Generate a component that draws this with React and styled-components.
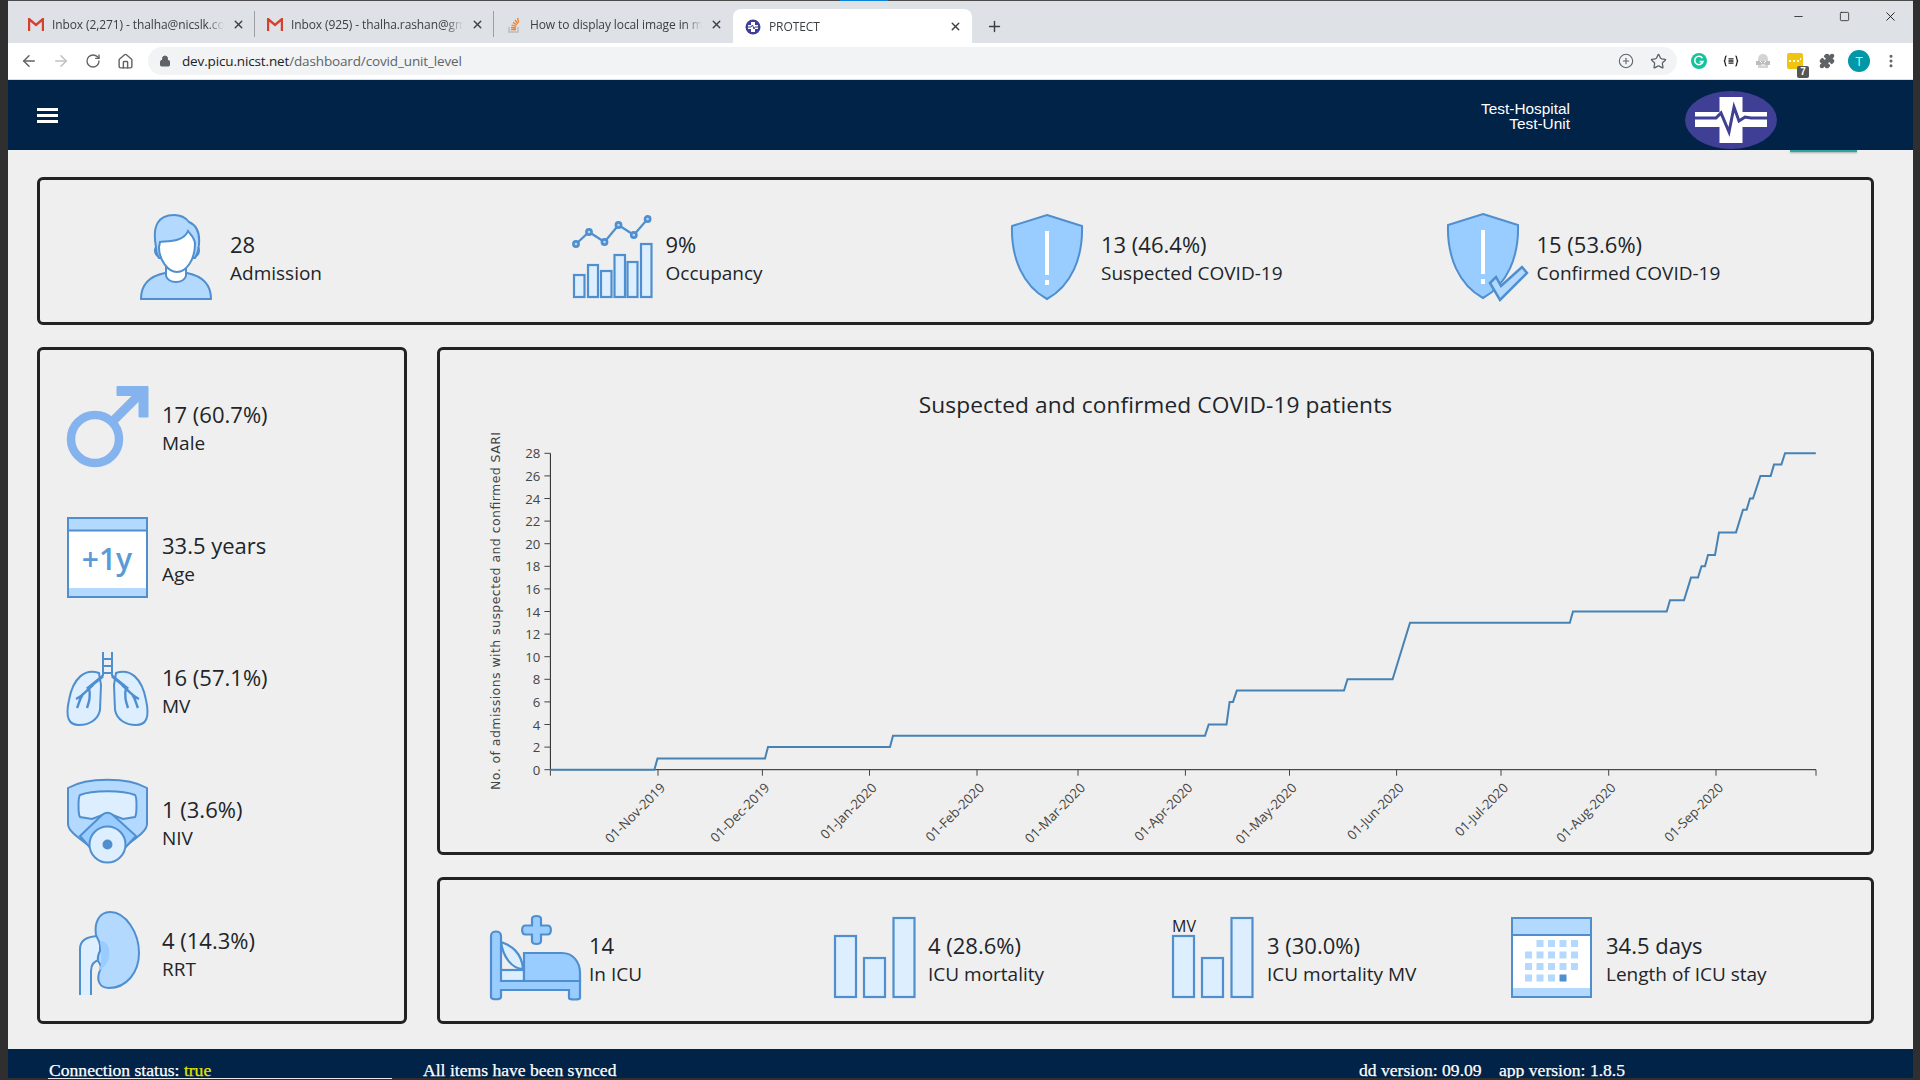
import styled, { createGlobalStyle } from "styled-components";
import {
  ArrowLeft,
  ArrowRight,
  RotateCw,
  House,
  Lock,
  CirclePlus,
  Star,
  Puzzle,
  EllipsisVertical,
  Minus,
  Square,
  X,
  Plus,
} from "lucide-react";

const STROKE = "#4f8fcf";
const LIGHT = "#b3d9ff";
const PALE = "#ddeeff";
const MID = "#99ccff";

const GlobalStyle = createGlobalStyle`
  html, body {
    margin: 0;
    height: 1080px;
    overflow: hidden;
    background: #2f2f2f;
  }
  * { box-sizing: border-box; }
`;

const Screen = styled.div`
  width: 1920px;
  height: 1080px;
  display: flex;
  flex-direction: column;
  position: relative;
  overflow: hidden;
`;

const Frame = styled.div`
  width: 1905px;
  height: 1078px;
  margin-left: 8px;
  display: flex;
  flex-direction: column;
  background: #efefef;
`;

const TopGlow = styled.div`
  position: absolute;
  left: 840px;
  top: 0;
  width: 48px;
  height: 1px;
  background: #0a84d6;
`;

const TabStrip = styled.div`
  height: 43px;
  flex: none;
  background: #dee1e6;
  border-top: 1px solid #4a4a4a;
  padding: 8px 0 0 8px;
  display: flex;
  align-items: stretch;
  font: 12px "Open Sans", sans-serif;
  color: #3c4043;
`;

const Tab = styled.div`
  width: 239px;
  flex: none;
  display: flex;
  align-items: center;
  gap: 8px;
  padding: 1px 9px 0 12px;
  border-right: 1px solid ${(p) => (p.$divider ? "#9aa0a6" : "transparent")};
  margin: ${(p) => (p.$active ? "0" : "2px 0 6px")};
  background: ${(p) => (p.$active ? "#fff" : "transparent")};
  border-radius: ${(p) => (p.$active ? "8px 8px 0 0" : "0")};
`;

const TabTitle = styled.span`
  flex: 1;
  white-space: nowrap;
  overflow: hidden;
  letter-spacing: -0.1px;
  mask-image: linear-gradient(to right, #000 90%, transparent);
`;

const NewTab = styled.div`
  width: 44px;
  display: flex;
  align-items: center;
  justify-content: center;
  color: #3c4043;
`;

const WindowControls = styled.div`
  margin-left: auto;
  margin-top: -8px;
  display: flex;
  align-items: flex-start;
  color: #111;
`;

const WindowButton = styled.div`
  width: 46px;
  height: 30px;
  display: flex;
  align-items: center;
  justify-content: center;
`;

const Toolbar = styled.div`
  height: 37px;
  flex: none;
  background: #fff;
  border-bottom: 1px solid #dadce0;
  display: flex;
  align-items: center;
  padding: 0 6px 0 5px;
  color: #5f6368;
`;

const NavButton = styled.div`
  width: 32px;
  height: 28px;
  flex: none;
  display: flex;
  align-items: center;
  justify-content: center;
  color: ${(p) => (p.$muted ? "#bdc1c6" : "#5f6368")};
`;

const Omnibox = styled.div`
  width: 1529px;
  height: 28px;
  margin-left: 7px;
  flex: none;
  border-radius: 14px;
  background: #f1f3f4;
  display: flex;
  align-items: center;
  padding: 0 3px 0 11px;
  font: 13.5px "Open Sans", sans-serif;
  letter-spacing: -0.14px;
  color: #5f6368;
`;

const UrlHost = styled.span`
  color: #202124;
  margin-left: 11px;
`;

const OmniActions = styled.div`
  margin-left: auto;
  display: flex;
`;

const Extensions = styled.div`
  display: flex;
  margin-left: 6px;
`;

const ExtBadge = styled.span`
  position: absolute;
  right: 2px;
  bottom: -3px;
  width: 12px;
  height: 12px;
  background: #555;
  color: #fff;
  border-radius: 2px;
  font: bold 10px/12px "Liberation Sans", sans-serif;
  text-align: center;
`;

const ExtSlot = styled(NavButton)`
  position: relative;
`;

const Avatar = styled.div`
  width: 22px;
  height: 22px;
  border-radius: 50%;
  background: #0097a7;
  color: #d9f4f7;
  font: 13px/22px "Open Sans", sans-serif;
  text-align: center;
`;

const Navbar = styled.header`
  height: 70px;
  flex: none;
  background: #012348;
  display: flex;
  align-items: center;
  padding: 0 0 0 29px;
  position: relative;
`;

const Hamburger = styled.div`
  width: 21px;
  display: flex;
  flex-direction: column;
  gap: 3px;
  margin-top: 1px;
  span {
    display: block;
    height: 3px;
    background: #fff;
  }
`;

const Hospital = styled.div`
  margin-left: auto;
  text-align: right;
  color: #fff;
  font: 15.4px/15px "Liberation Sans", sans-serif;
  width: 300px;
  margin-top: 1px;
`;

const LogoWrap = styled.div`
  margin-left: 115px;
  margin-right: 136px;
  margin-top: 10px;
  display: flex;
`;

const TealEdge = styled.div`
  position: absolute;
  left: 1782px;
  top: 70px;
  width: 67px;
  height: 2px;
  background: #2aa7a0;
  box-shadow: 0 1px 2px rgba(0, 0, 0, 0.3);
`;

const Dashboard = styled.main`
  flex: 1;
  min-height: 0;
  padding: 27px 39px 0 29px;
  display: grid;
  grid-template-columns: 370px 1437px;
  grid-template-rows: 147.5px 507.5px 147px;
  align-content: start;
  column-gap: 30px;
  row-gap: 22.5px;
  font-family: "Open Sans", sans-serif;
  color: #212529;
`;

const Card = styled.section`
  border: 3px solid #222;
  border-radius: 6px;
  min-width: 0;
`;

const TopCard = styled(Card)`
  grid-column: 1 / 3;
  display: grid;
  grid-template-columns: repeat(4, 435.5px);
  align-items: center;
  padding: 17px 0 0 90px;
`;

const SideCard = styled(Card)`
  grid-row: 2 / 4;
  display: grid;
  grid-auto-rows: 131.6px;
  align-items: center;
  padding: 13px 0 0 22px;
`;

const ChartCard = styled(Card)`
  display: flex;
  flex-direction: column;
`;

const BottomCard = styled(Card)`
  display: grid;
  grid-template-columns: repeat(4, 339px);
  align-items: center;
  padding: 18px 0 0 49px;
`;

const Stat = styled.div`
  display: flex;
  align-items: center;
`;

const IconSlot = styled.div`
  width: 100px;
  flex: none;
  display: flex;
  justify-content: flex-end;
  padding-right: ${(p) => p.$gap}px;
  margin-bottom: 5px;
  svg {
    display: block;
    overflow: visible;
  }
`;

const StatValue = styled.div`
  font-size: 22px;
  line-height: 29px;
  white-space: nowrap;
`;

const StatLabel = styled.div`
  font-size: 19px;
  line-height: 29px;
  white-space: nowrap;
`;

const ChartTitle = styled.h2`
  margin: 0;
  padding-top: 40px;
  height: 80px;
  text-align: center;
  font-size: 22.7px;
  font-weight: 400;
  line-height: 30px;
  letter-spacing: 0.1px;
`;

const ChartSvg = styled.svg`
  display: block;
  flex: none;
  text {
    fill: #444;
    font-family: "Open Sans", sans-serif;
    font-size: 13.2px;
  }
`;

const Footer = styled.footer`
  height: 29px;
  margin-top: auto;
  flex: none;
  background: #012348;
  color: #fff;
  font: 17.6px/18px "Liberation Serif", serif;
  -webkit-text-stroke: 0.25px #fff;
  display: flex;
  padding: 12px 0 0 41px;
  white-space: nowrap;
  overflow: hidden;
`;

const FooterItem = styled.span`
  width: ${(p) => p.$width}px;
  flex: none;
`;

const Truthy = styled.span`
  color: #e2e600;
  -webkit-text-stroke-color: #e2e600;
`;

const BottomStrip = styled.div`
  height: 2px;
  flex: none;
  padding-left: 48px;
`;

const ProgressLine = styled.div`
  width: 344px;
  height: 1px;
  background: #e8e8e8;
`;

const IconPerson = () => (
  <svg width="72" height="86" viewBox="0 0 72 86" stroke={STROKE} strokeWidth="2">
    <path d="M1 85C1 70 10 62 25 59L47 59C62 62 71 70 71 85Z" fill={LIGHT} />
    <path d="M26 52V62C29 70 43 70 46 62V52Z" fill="#fff" />
    <path d="M16 33C12 12 18 1 34 1C42 1 46 4 49 8C56 11 60 18 59 30C59 36 57 40 55 44L19 44C17 41 16 37 16 33Z" fill={LIGHT} />
    <path d="M20 28C27 27 44 28 48 17C51 21 55 24 55 30C55 46 46 58 37 58C28 58 19 46 19 33Z" fill="#fff" />
    <path d="M16 33C14 36 15 41 19 43M58 33C60 36 59 41 55 43" fill="none" />
  </svg>
);

const OCC_BARS = [
  [1, 60, 10.5],
  [15, 50, 10],
  [28, 56, 10.5],
  [41.5, 40, 10.5],
  [54.5, 47, 10],
  [68, 29, 10.5],
];

const OCC_POINTS = [
  [3, 29],
  [16, 17],
  [31.5, 27],
  [45.5, 10],
  [60.8, 20],
  [74.6, 4],
];

const IconOccupancy = () => (
  <svg width="80" height="83" viewBox="0 0 80 83" stroke={STROKE} strokeWidth="2.2" fill={PALE}>
    {OCC_BARS.map(([x, y, w]) => (
      <rect key={x} x={x} y={y} width={w} height={82 - y} />
    ))}
    <polyline points={OCC_POINTS.map((p) => p.join(",")).join(" ")} fill="none" />
    {OCC_POINTS.map(([x, y]) => (
      <circle key={x} cx={x} cy={y} r="2.6" fill={LIGHT} strokeWidth="2.6" />
    ))}
  </svg>
);

const Shield = () => (
  <>
    <path d="M36 1L71 12C72 44 60 72 36 85C12 72 0 44 1 12Z" fill={MID} stroke={STROKE} strokeWidth="2" />
    <rect x="34" y="17" width="4" height="44" fill="#fff" />
    <rect x="34" y="66" width="4" height="5" fill="#fff" />
  </>
);

const IconShield = () => (
  <svg width="72" height="86" viewBox="0 0 72 86">
    <Shield />
  </svg>
);

const IconShieldCheck = () => (
  <svg width="80" height="88" viewBox="0 0 80 88">
    <Shield />
    <path
      d="M43 70L49 64L54 73L75 54L80 60L53 87Z"
      fill={LIGHT}
      stroke={STROKE}
      strokeWidth="2.5"
    />
  </svg>
);

const IconMale = () => (
  <svg width="82" height="81" viewBox="0 0 82 81" fill="none" stroke="#85b3ee">
    <circle cx="29" cy="53" r="24" strokeWidth="8.5" />
    <path d="M46 36L76 6" strokeWidth="9" />
    <path d="M51 0.5H82V31H73V9.5H51Z" fill="#85b3ee" strokeWidth="1" />
  </svg>
);

const IconAge = () => (
  <svg width="81" height="81" viewBox="0 0 81 81">
    <rect x="1" y="1" width="79" height="79" fill="#fff" stroke={STROKE} strokeWidth="2" />
    <rect x="2" y="2" width="77" height="11" fill={LIGHT} />
    <rect x="2" y="71" width="77" height="8" fill={LIGHT} />
    <path d="M1 13.5H80" stroke={STROKE} strokeWidth="2" />
    <text x="40" y="53" textAnchor="middle" fontFamily="Open Sans, sans-serif" fontWeight="600" fontSize="30" fill="#5b9bd5">
      +1y
    </text>
  </svg>
);

const IconLungs = () => (
  <svg width="85" height="74" viewBox="0 0 85 74" stroke={STROKE} strokeWidth="2" fill="none">
    <path d="M34 21C20 16 8 26 4 48C0 66 4 73 14 73C24 73 33 68 35 58L36 33Z" fill={PALE} />
    <path d="M51 21C65 16 77 26 81 48C85 66 81 73 71 73C61 73 52 68 50 58L49 33Z" fill={PALE} />
    <path d="M38 0V24M47 0V24M38 7H47M38 14H47M38 21H47" />
    <path d="M38 24L22 37M47 24L63 37" strokeWidth="3" />
    <path d="M28 33C22 38 18 44 11 47M24 36C26 44 24 50 22 56M18 42C14 48 14 52 12 56" strokeWidth="2.4" />
    <path d="M57 33C63 38 67 44 74 47M61 36C59 44 61 50 63 56M67 42C71 48 71 52 73 56" strokeWidth="2.4" />
  </svg>
);

const IconNiv = () => (
  <svg width="81" height="86" viewBox="0 0 81 86" stroke={STROKE} strokeWidth="2">
    <path d="M1 10C20 -1 61 -1 80 10V46C80 54 66 62 56 70H25C15 62 1 54 1 46Z" fill={LIGHT} />
    <path d="M13 17C25 12 56 12 68 17C70 19 70 36 68 39L56 41L40.5 35L25 41L13 39C11 36 11 19 13 17Z" fill={PALE} />
    <path d="M13 58L35 37C38 34 43 34 46 37L69 58L56 72H25Z" fill={MID} />
    <circle cx="40.5" cy="66.5" r="18" fill={PALE} />
    <circle cx="40.5" cy="66.5" r="4" fill={STROKE} />
  </svg>
);

const IconKidney = () => (
  <svg width="60" height="84" viewBox="0 0 60 84" stroke={STROKE} strokeWidth="2">
    <path d="M1 84V38C1 29 8 25 21 25V49C14 50 12 54 12 60V84" fill={PALE} />
    <path d="M31 1C47 1 60 22 60 42C60 62 47 77 30 77C20 77 18 69 20 62C23 56 22 54 19 50C18 44 20 42 22 38C21 32 20 29 17 24C15 12 20 1 31 1Z" fill={LIGHT} />
    <path d="M21 30C30 30 31 40 30 44C30 50 28 54 20 60C24 50 22 40 21 30Z" fill={MID} stroke="none" />
  </svg>
);

const IconBed = () => (
  <svg width="91" height="85" viewBox="0 0 91 85" stroke={STROKE} strokeWidth="2.2">
    <path d="M42 10.5V4C42 0 51 0 51 4V10.5H57.5C62 10.5 62 19.5 57.5 19.5H51V26C51 30 42 30 42 26V19.5H35.5C31 19.5 31 10.5 35.5 10.5Z" fill={MID} />
    <path d="M11 27C21 30 32 38 33 54C22 54 13 42 11 27Z" fill={PALE} />
    <rect x="10" y="55" width="24" height="11" fill={PALE} />
    <path d="M34 38H72C83 38 90 47 90 58V66H34Z" fill={MID} />
    <path d="M1 21C1 15 11 15 11 21V66H90V83C90 85 79 85 79 83V75H11V82C11 85 1 85 1 82Z" fill={MID} />
  </svg>
);

const Bars = () => (
  <g fill={PALE} stroke={STROKE} strokeWidth="2.2">
    <rect x="1" y="19" width="21" height="61" />
    <rect x="30" y="41" width="21" height="39" />
    <rect x="59.5" y="1" width="21" height="79" />
  </g>
);

const IconBars = () => (
  <svg width="82" height="81" viewBox="0 0 82 81">
    <Bars />
  </svg>
);

const IconBarsMv = () => (
  <svg width="82" height="81" viewBox="0 0 82 81">
    <Bars />
    <text x="0" y="15" fontFamily="Open Sans, sans-serif" fontSize="16" fill="#222">
      MV
    </text>
  </svg>
);

const CAL_CELLS = [
  [1, 0], [2, 0], [3, 0], [4, 0],
  [0, 1], [1, 1], [2, 1], [3, 1], [4, 1],
  [0, 2], [1, 2], [2, 2], [3, 2], [4, 2],
  [0, 3], [1, 3], [2, 3],
];

const IconCalendar = () => (
  <svg width="81" height="81" viewBox="0 0 81 81">
    <rect x="1" y="1" width="79" height="79" fill="#fff" stroke={STROKE} strokeWidth="2" />
    <rect x="2" y="2" width="77" height="15" fill={LIGHT} />
    <rect x="2" y="71" width="77" height="8" fill={LIGHT} />
    <path d="M1 18H80" stroke={STROKE} strokeWidth="2" />
    {CAL_CELLS.map(([cx, cy]) => (
      <rect key={`${cx}-${cy}`} x={14 + cx * 11.5} y={23 + cy * 11.5} width="7" height="7" fill={LIGHT} />
    ))}
    <rect x="48.5" y="57.5" width="7" height="7" fill={STROKE} />
  </svg>
);

const IconLogo = () => (
  <svg width="92" height="58" viewBox="0 0 92 58">
    <ellipse cx="46" cy="29" rx="46" ry="29" fill="#3f3f95" />
    <path d="M34.5 6H57.5V21H82V36H57.5V52H34.5V36H10V21H34.5Z" fill="#fff" />
    <path d="M10 27H31L36 22L44 41L49 16L54 30L60 26L66 27H82" fill="none" stroke="#3f3f95" strokeWidth="3" />
  </svg>
);

const IconGmail = () => (
  <svg width="16" height="14" viewBox="0 0 16 14">
    <path d="M1 13V1L8 7L15 1V13" fill="none" stroke="#d6402f" strokeWidth="2.4" />
  </svg>
);

const IconStack = () => (
  <svg width="16" height="16" viewBox="0 0 16 16">
    <path d="M3 10V15H12V10" fill="none" stroke="#bcbbbb" strokeWidth="1.4" />
    <path d="M5 12.5H10M5 10.3L10 11M5.6 8L10.2 9.4M7 5.4L10.8 8M9 3L11.8 6.8M11.6 1L12.6 5.6" stroke="#f48024" strokeWidth="1.3" fill="none" />
  </svg>
);

const IconProtect = () => (
  <svg width="16" height="16" viewBox="0 0 16 16">
    <circle cx="8" cy="8" r="7.5" fill="#3f3f95" />
    <path d="M6 3H10V6H13V10H10V13H6V10H3V6H6Z" fill="#fff" />
    <path d="M3 8H6L7.5 6L9 10L10 8H13" stroke="#3f3f95" fill="none" />
  </svg>
);

const IconGrammarly = () => (
  <svg width="16" height="16" viewBox="0 0 16 16">
    <circle cx="8" cy="8" r="8" fill="#15c39a" />
    <path d="M11.5 5.2A4.2 4.2 0 1 0 12 8.6H8.6" fill="none" stroke="#fff" strokeWidth="1.6" />
  </svg>
);

const IconGhost = () => (
  <svg width="16" height="16" viewBox="0 0 16 16">
    <path d="M3 15V7C3 3 5 1 8 1C11 1 13 3 13 7V15Z" fill="#d4d4d4" />
    <path d="M1 8H15V12H1Z" fill="#bdbdbd" />
    <path d="M5 8L7 10M11 8L9 10M6 12H10" stroke="#fff" />
  </svg>
);

const IconYellowExt = () => (
  <svg width="16" height="16" viewBox="0 0 16 16">
    <rect width="16" height="16" rx="2" fill="#f1c40f" />
    <path d="M2 8H4M6 8H8M10 8H12M13 6H14" stroke="#fff" strokeWidth="2" />
  </svg>
);

const IconBraces = () => (
  <svg width="16" height="12" viewBox="0 0 16 12" fill="none" stroke="#222" strokeWidth="1.3">
    <path d="M3.5 1C1.5 1 3 5.5 1 6C3 6.5 1.5 11 3.5 11M12.5 1C14.5 1 13 5.5 15 6C13 6.5 14.5 11 12.5 11M5.5 3.8H10.5M5.5 6H10.5M5.5 8.2H10.5" />
  </svg>
);

const TOP_STATS = [
  { icon: IconPerson, gap: 18, value: "28", label: "Admission" },
  { icon: IconOccupancy, gap: 13, value: "9%", label: "Occupancy" },
  { icon: IconShield, gap: 18, value: "13 (46.4%)", label: "Suspected COVID-19" },
  { icon: IconShieldCheck, gap: 10, value: "15 (53.6%)", label: "Confirmed COVID-19" },
];

const SIDE_STATS = [
  { icon: IconMale, gap: 14, value: "17 (60.7%)", label: "Male" },
  { icon: IconAge, gap: 14, value: "33.5 years", label: "Age" },
  { icon: IconLungs, gap: 12, value: "16 (57.1%)", label: "MV" },
  { icon: IconNiv, gap: 14, value: "1 (3.6%)", label: "NIV" },
  { icon: IconKidney, gap: 23, value: "4 (14.3%)", label: "RRT" },
];

const BOTTOM_STATS = [
  { icon: IconBed, gap: 8, value: "14", label: "In ICU" },
  { icon: IconBars, gap: 12, value: "4 (28.6%)", label: "ICU mortality" },
  { icon: IconBarsMv, gap: 13, value: "3 (30.0%)", label: "ICU mortality MV" },
  { icon: IconCalendar, gap: 14, value: "34.5 days", label: "Length of ICU stay" },
];

const Y0 = 769.7;
const UNIT = 11.3;
const X0 = 550.4;
const X_END = 1816;
const yOf = (v) => Y0 - v * UNIT;

const X_TICKS = [
  [658, "01-Nov-2019"],
  [762.4, "01-Dec-2019"],
  [869.5, "01-Jan-2020"],
  [977, "01-Feb-2020"],
  [1078, "01-Mar-2020"],
  [1185.4, "01-Apr-2020"],
  [1289.5, "01-May-2020"],
  [1396.6, "01-Jun-2020"],
  [1501, "01-Jul-2020"],
  [1608.7, "01-Aug-2020"],
  [1716, "01-Sep-2020"],
];

const SERIES = [
  [550.4, 0], [654.4, 0], [657.5, 1], [765, 1], [768, 2], [890, 2], [893, 3],
  [1205, 3], [1208.7, 4], [1226.5, 4], [1229.6, 6], [1233, 6], [1236.8, 7],
  [1344, 7], [1347.5, 8], [1392.6, 8], [1410, 13], [1569.8, 13], [1573, 14],
  [1666.7, 14], [1670, 15], [1684, 15], [1691, 17], [1698, 17], [1701.5, 18],
  [1705, 18], [1708, 19], [1715, 19], [1719, 21], [1736, 21], [1743, 23],
  [1746.6, 23], [1750, 24], [1753, 24], [1760.4, 26], [1770.7, 26], [1774, 27],
  [1781.4, 27], [1785, 28], [1815.8, 28],
];

function StatItem({ stat }) {
  const Icon = stat.icon;
  return (
    <Stat>
      <IconSlot $gap={stat.gap}>
        <Icon />
      </IconSlot>
      <div>
        <StatValue>{stat.value}</StatValue>
        <StatLabel>{stat.label}</StatLabel>
      </div>
    </Stat>
  );
}

function AdmissionsChart() {
  const ticks = [];
  for (let v = 0; v <= 28; v += 2) ticks.push(v);
  const line = SERIES.map(([x, v]) => `${x},${yOf(v)}`).join(" ");

  return (
    <ChartSvg width="1431" height="421" viewBox="440 430 1431 421">
      <text
        transform="translate(500 790) rotate(-90)"
        style={{ fontFamily: "DejaVu Sans, sans-serif", fontSize: 12.5 }}
        textLength="358"
      >
        No. of admissions with suspected and confirmed SARI
      </text>
      <path d={`M${X0} ${Y0 - 28 * UNIT}V${Y0}H${X_END}`} stroke="#222" fill="none" />
      {ticks.map((v) => (
        <g key={v}>
          <path d={`M${X0 - 6} ${yOf(v)}H${X0}`} stroke="#444" />
          <text x={X0 - 10} y={yOf(v) + 5} textAnchor="end">
            {v}
          </text>
        </g>
      ))}
      <path d={`M${X0} ${Y0}v6M${X_END} ${Y0}v6`} stroke="#444" />
      {X_TICKS.map(([x, label]) => (
        <g key={label}>
          <path d={`M${x} ${Y0}v6`} stroke="#444" />
          <text transform={`translate(${x + 8} ${Y0 + 19}) rotate(-45)`} textAnchor="end">
            {label}
          </text>
        </g>
      ))}
      <polyline points={line} fill="none" stroke="#4682b4" strokeWidth="2" />
    </ChartSvg>
  );
}

function BrowserChrome() {
  return (
    <>
      <TabStrip>
        <Tab $divider>
          <IconGmail />
          <TabTitle>Inbox (2,271) - thalha@nicslk.com</TabTitle>
          <X size={13} strokeWidth={2.5} />
        </Tab>
        <Tab $divider>
          <IconGmail />
          <TabTitle>Inbox (925) - thalha.rashan@gma</TabTitle>
          <X size={13} strokeWidth={2.5} />
        </Tab>
        <Tab>
          <IconStack />
          <TabTitle>How to display local image in ma</TabTitle>
          <X size={13} strokeWidth={2.5} />
        </Tab>
        <Tab $active>
          <IconProtect />
          <TabTitle>PROTECT</TabTitle>
          <X size={13} strokeWidth={2.5} />
        </Tab>
        <NewTab>
          <Plus size={17} strokeWidth={2} />
        </NewTab>
        <WindowControls>
          <WindowButton>
            <Minus size={13} strokeWidth={1.4} />
          </WindowButton>
          <WindowButton>
            <Square size={11} strokeWidth={1.6} />
          </WindowButton>
          <WindowButton>
            <X size={15} strokeWidth={1.4} />
          </WindowButton>
        </WindowControls>
      </TabStrip>
      <Toolbar>
        <NavButton>
          <ArrowLeft size={18} />
        </NavButton>
        <NavButton $muted>
          <ArrowRight size={18} />
        </NavButton>
        <NavButton>
          <RotateCw size={16} />
        </NavButton>
        <NavButton>
          <House size={17} />
        </NavButton>
        <Omnibox>
          <Lock size={12} fill="#5f6368" />
          <UrlHost>dev.picu.nicst.net</UrlHost>
          /dashboard/covid_unit_level
          <OmniActions>
            <NavButton>
              <CirclePlus size={16} strokeWidth={1.6} />
            </NavButton>
            <NavButton>
              <Star size={17} strokeWidth={1.8} />
            </NavButton>
          </OmniActions>
        </Omnibox>
        <Extensions>
          <NavButton>
            <IconGrammarly />
          </NavButton>
          <NavButton>
            <IconBraces />
          </NavButton>
          <NavButton>
            <IconGhost />
          </NavButton>
          <ExtSlot>
            <IconYellowExt />
            <ExtBadge>7</ExtBadge>
          </ExtSlot>
          <NavButton>
            <Puzzle size={16} fill="#5f6368" />
          </NavButton>
          <NavButton>
            <Avatar>T</Avatar>
          </NavButton>
          <NavButton>
            <EllipsisVertical size={16} strokeWidth={2.6} />
          </NavButton>
        </Extensions>
      </Toolbar>
    </>
  );
}

export default function App() {
  return (
    <Screen>
      <GlobalStyle />
      <TopGlow />
      <Frame>
        <BrowserChrome />
        <Navbar>
          <Hamburger>
            <span />
            <span />
            <span />
          </Hamburger>
          <Hospital>
            Test-Hospital
            <br />
            Test-Unit
          </Hospital>
          <LogoWrap>
            <IconLogo />
          </LogoWrap>
          <TealEdge />
        </Navbar>
        <Dashboard>
          <TopCard>
            {TOP_STATS.map((s) => (
              <StatItem key={s.label} stat={s} />
            ))}
          </TopCard>
          <SideCard>
            {SIDE_STATS.map((s) => (
              <StatItem key={s.label} stat={s} />
            ))}
          </SideCard>
          <ChartCard>
            <ChartTitle>Suspected and confirmed COVID-19 patients</ChartTitle>
            <AdmissionsChart />
          </ChartCard>
          <BottomCard>
            {BOTTOM_STATS.map((s) => (
              <StatItem key={s.label} stat={s} />
            ))}
          </BottomCard>
        </Dashboard>
        <Footer>
          <FooterItem $width={374}>
            Connection status: <Truthy>true</Truthy>
          </FooterItem>
          <FooterItem $width={936}>All items have been synced</FooterItem>
          <FooterItem $width={140}>dd version: 09.09</FooterItem>
          <FooterItem $width={200}>app version: 1.8.5</FooterItem>
        </Footer>
      </Frame>
      <BottomStrip>
        <ProgressLine />
      </BottomStrip>
    </Screen>
  );
}
